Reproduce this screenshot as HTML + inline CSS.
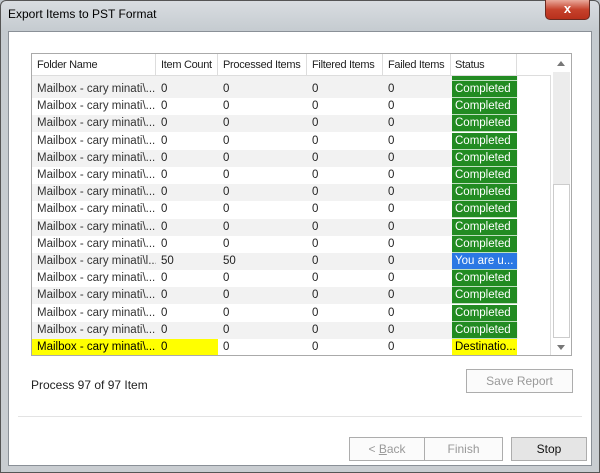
<!DOCTYPE html>
<html><head><style>
*{margin:0;padding:0;box-sizing:border-box}
body{width:600px;height:473px;overflow:hidden;background:#bfc6cc;font-family:"Liberation Sans",sans-serif;font-size:11.5px;color:#222;position:relative}
.frame{position:absolute;left:0;top:0;width:600px;height:473px;background:linear-gradient(#d9dde1,#c5cbd0 30px,#c9cdd1);border:1px solid #555;border-radius:6px 6px 0 0}
.title{position:absolute;left:8px;top:7px;font-size:12px;color:#000}
.close{position:absolute;left:545px;top:0;width:45px;height:20px;background:linear-gradient(#e9a99b,#c6422c 50%,#b8301c);border:1px solid #6b2a20;border-top:none;border-radius:0 0 5px 5px;color:#fff;text-align:center;font-weight:bold;font-size:13px;line-height:18px}
.client{position:absolute;left:8px;top:31px;width:584px;height:435px;background:#fff;border:1px solid #8a9097}
.grid{position:absolute;left:31px;top:53px;width:541px;height:303px;border:1px solid #aaa;background:#fff;overflow:hidden}
.row{position:absolute;left:0;height:17px;width:486px;line-height:17px}
.row:nth-child(even){background:#f2f2f2}
.c{position:absolute;top:0;height:17px;padding-left:5px;white-space:nowrap;overflow:hidden}
.c1{left:0;width:124px;color:#333}.c2{left:124px;width:62px}.c3{left:186px;width:89px}.c4{left:275px;width:76px}.c5{left:351px;width:68px}.c6{left:420px;width:65px;color:#fff;background:#228b22;padding-left:3px;border-bottom:1px solid #bfe0bf}
.hdr{position:absolute;left:0;top:0;height:22px;width:519px;border-bottom:1px solid #ddd;background:#fff;z-index:2}
.hdr .c{height:22px;line-height:22px;border-right:1px solid #ddd;color:#222;background:none;font-size:11px;letter-spacing:-0.3px;border-bottom:none}
.sb{position:absolute;left:518px;top:0;width:21px;height:301px;background:#fff;border-left:1px solid #ddd}
.sb .tr{position:absolute;left:2px;top:18px;width:17px;height:112px;background:#ececec}
.sb .t{position:absolute;left:2px;top:130px;width:17px;height:154px;background:#fff;border:1px solid #ccc}
.btn{position:absolute;height:24px;border:1px solid #adadad;background:#fbfbfb;text-align:center;line-height:22px;color:#999;font-size:12px}
.y{background:#ffff00!important;color:#000!important}
</style></head><body>
<div class="frame"></div>
<div class="title">Export Items to PST Format</div>
<div class="close">x</div>
<div class="client"></div>
<div class="grid">
<div class="hdr">
<div class="c c1">Folder Name</div><div class="c c2">Item Count</div><div class="c c3">Processed Items</div><div class="c c4">Filtered Items</div><div class="c c5">Failed Items</div><div class="c c6" style="color:#222">Status</div>
</div>
<div>
<div class="row" style="top:22px;height:5px;background:#f2f2f2"><div class="c c6" style="height:5px"></div></div>
<div class="row" style="top:27px"><div class="c c1">Mailbox - cary minati\...</div><div class="c c2">0</div><div class="c c3">0</div><div class="c c4">0</div><div class="c c5">0</div><div class="c c6">Completed</div></div>
<div class="row" style="top:44.2px"><div class="c c1">Mailbox - cary minati\...</div><div class="c c2">0</div><div class="c c3">0</div><div class="c c4">0</div><div class="c c5">0</div><div class="c c6">Completed</div></div>
<div class="row" style="top:61.4px"><div class="c c1">Mailbox - cary minati\...</div><div class="c c2">0</div><div class="c c3">0</div><div class="c c4">0</div><div class="c c5">0</div><div class="c c6">Completed</div></div>
<div class="row" style="top:78.6px"><div class="c c1">Mailbox - cary minati\...</div><div class="c c2">0</div><div class="c c3">0</div><div class="c c4">0</div><div class="c c5">0</div><div class="c c6">Completed</div></div>
<div class="row" style="top:95.8px"><div class="c c1">Mailbox - cary minati\...</div><div class="c c2">0</div><div class="c c3">0</div><div class="c c4">0</div><div class="c c5">0</div><div class="c c6">Completed</div></div>
<div class="row" style="top:113px"><div class="c c1">Mailbox - cary minati\...</div><div class="c c2">0</div><div class="c c3">0</div><div class="c c4">0</div><div class="c c5">0</div><div class="c c6">Completed</div></div>
<div class="row" style="top:130.2px"><div class="c c1">Mailbox - cary minati\...</div><div class="c c2">0</div><div class="c c3">0</div><div class="c c4">0</div><div class="c c5">0</div><div class="c c6">Completed</div></div>
<div class="row" style="top:147.4px"><div class="c c1">Mailbox - cary minati\...</div><div class="c c2">0</div><div class="c c3">0</div><div class="c c4">0</div><div class="c c5">0</div><div class="c c6">Completed</div></div>
<div class="row" style="top:164.6px"><div class="c c1">Mailbox - cary minati\...</div><div class="c c2">0</div><div class="c c3">0</div><div class="c c4">0</div><div class="c c5">0</div><div class="c c6">Completed</div></div>
<div class="row" style="top:181.8px"><div class="c c1">Mailbox - cary minati\...</div><div class="c c2">0</div><div class="c c3">0</div><div class="c c4">0</div><div class="c c5">0</div><div class="c c6">Completed</div></div>
<div class="row" style="top:199px"><div class="c c1">Mailbox - cary minati\l...</div><div class="c c2">50</div><div class="c c3">50</div><div class="c c4">0</div><div class="c c5">0</div><div class="c c6" style="background:#2b78e4">You are u...</div></div>
<div class="row" style="top:216.2px"><div class="c c1">Mailbox - cary minati\...</div><div class="c c2">0</div><div class="c c3">0</div><div class="c c4">0</div><div class="c c5">0</div><div class="c c6">Completed</div></div>
<div class="row" style="top:233.4px"><div class="c c1">Mailbox - cary minati\...</div><div class="c c2">0</div><div class="c c3">0</div><div class="c c4">0</div><div class="c c5">0</div><div class="c c6">Completed</div></div>
<div class="row" style="top:250.6px"><div class="c c1">Mailbox - cary minati\...</div><div class="c c2">0</div><div class="c c3">0</div><div class="c c4">0</div><div class="c c5">0</div><div class="c c6">Completed</div></div>
<div class="row" style="top:267.8px"><div class="c c1">Mailbox - cary minati\...</div><div class="c c2">0</div><div class="c c3">0</div><div class="c c4">0</div><div class="c c5">0</div><div class="c c6">Completed</div></div>
<div class="row" style="top:285px"><div class="c c1 y">Mailbox - cary minati\...</div><div class="c c2 y">0</div><div class="c c3">0</div><div class="c c4">0</div><div class="c c5">0</div><div class="c c6 y">Destinatio...</div></div>
</div>
<div class="sb"><div class="tr"></div><div style="position:absolute;left:6px;top:7px;border:4px solid transparent;border-bottom:5px solid #777;border-top:0"></div><div class="t"></div><div style="position:absolute;left:6px;top:291px;border:4px solid transparent;border-top:5px solid #777;border-bottom:0"></div></div>
</div>
<div style="position:absolute;left:31px;top:378px;font-size:12px;color:#222">Process 97 of 97 Item</div>
<div class="btn" style="left:466px;top:369px;width:107px">Save Report</div>
<div style="position:absolute;left:18px;top:416px;width:564px;height:1px;background:#e3e3e3"></div>
<div class="btn" style="left:349px;top:437px;width:76px">&lt; <u>B</u>ack</div>
<div class="btn" style="left:424px;top:437px;width:79px">Finish</div>
<div class="btn" style="left:511px;top:437px;width:76px;background:#e5e5e5;color:#111">Stop</div>
</body></html>
